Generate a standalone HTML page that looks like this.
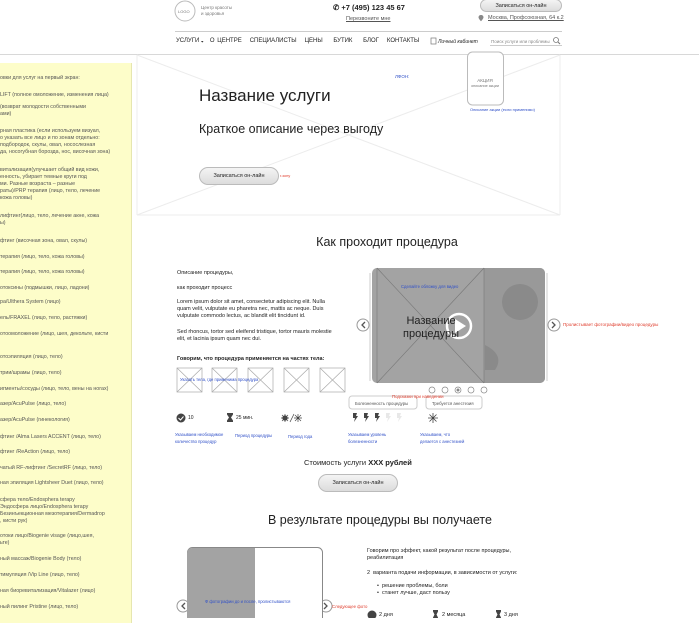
<!DOCTYPE html>
<html><head><meta charset="utf-8">
<style>
*{margin:0;padding:0;box-sizing:border-box}
body{width:699px;height:618px;overflow:hidden;background:#fff;font-family:"Liberation Sans","Noto Sans CJK SC",sans-serif;color:#222;position:relative}
.a{position:absolute;white-space:nowrap}
.s{font-size:5.5px;line-height:7px}
.b{color:#3050c8}
.r{color:#e04030}
.btn{position:absolute;border:1px solid #bbb;border-radius:10px;background:linear-gradient(#f4f4f4,#dcdcdc);font-size:5.5px;display:flex;align-items:center;justify-content:center}
#side{position:absolute;left:0;top:63px;width:132px;height:560px;background:#fdfdc9;border-right:1px solid #e6e6b0;color:#555;font-size:5.3px;line-height:7px;overflow:hidden}
#side div{position:absolute;left:0;white-space:nowrap}
.ico{position:absolute}
</style></head><body>

<svg class="a" style="left:0;top:0" width="699" height="618">
 <line x1="0" y1="54.5" x2="699" y2="54.5" stroke="#d8d8d8"/>
 <line x1="175" y1="31.5" x2="562" y2="31.5" stroke="#ccc"/>
 <!-- hero wireframe -->
 <g stroke="#ececec" stroke-width="1" fill="none">
  <line x1="137" y1="55" x2="137" y2="215"/>
  <line x1="560" y1="55" x2="560" y2="215"/>
  <line x1="137" y1="215" x2="560" y2="215"/>
  <line x1="137" y1="55" x2="560" y2="215"/>
  <line x1="560" y1="55" x2="137" y2="215"/>
 </g>
 <!-- action box -->
 <rect x="467.5" y="52" width="36" height="53" rx="5" fill="#fff" stroke="#bbb"/>
 <!-- logo -->
 <circle cx="185" cy="11" r="10" fill="#fff" stroke="#bbb"/>
 <!-- video -->
 <rect x="372" y="268" width="173" height="115" rx="5" fill="#a3a3a3"/>
 <rect x="484" y="268" width="61" height="115" rx="5" fill="#999"/>
 <rect x="484" y="268" width="6" height="115" fill="#999"/>
 <circle cx="520" cy="302" r="18" fill="#8a8a8a"/>
 <path d="M485 345 q20 10 10 25 l-10 0z" fill="#8a8a8a"/>
 <g stroke="#777" stroke-width="0.6">
  <line x1="377" y1="268" x2="484" y2="383"/><line x1="484" y1="268" x2="377" y2="383"/>
  <line x1="377" y1="268" x2="377" y2="383"/><line x1="484" y1="268" x2="484" y2="383"/>
 </g>
 <path d="M370 273v108M547 273v108" stroke="#ccc"/>
 <circle cx="459" cy="326" r="12" fill="none" stroke="#fff" stroke-width="2.5"/>
 <path d="M455 319v14l11-7z" fill="#fff"/>
 <!-- arrows -->
 <g fill="#fff" stroke="#999">
  <circle cx="363" cy="325" r="6"/><circle cx="554" cy="325" r="6"/>
  <circle cx="183" cy="606" r="6"/><circle cx="326" cy="606" r="6"/>
 </g>
 <g fill="none" stroke="#555" stroke-width="1.3">
  <path d="M365 322l-3 3 3 3"/><path d="M552 322l3 3-3 3"/>
  <path d="M185 603l-3 3 3 3"/><path d="M324 603l3 3-3 3"/>
 </g>
 <!-- dots -->
 <g fill="#fff" stroke="#888" stroke-width="0.7">
  <circle cx="432" cy="390" r="3"/><circle cx="445" cy="390" r="3"/><circle cx="458" cy="390" r="3"/><circle cx="471" cy="390" r="3"/><circle cx="484" cy="390" r="3"/>
 </g>
 <circle cx="458" cy="390" r="1.5" fill="#888"/>
 <!-- body part boxes -->
 <g fill="none" stroke="#aaa" stroke-width="0.7">
  <rect x="177" y="368" width="25" height="24"/><path d="M177 368l25 24M202 368l-25 24"/>
  <rect x="212" y="368" width="25" height="24"/><path d="M212 368l25 24M237 368l-25 24"/>
  <rect x="248" y="368" width="25" height="24"/><path d="M248 368l25 24M273 368l-25 24"/>
  <rect x="284" y="368" width="25" height="24"/><path d="M284 368l25 24M309 368l-25 24"/>
  <rect x="320" y="368" width="25" height="24"/><path d="M320 368l25 24M345 368l-25 24"/>
 </g>
 <!-- tooltips -->
 <rect x="349" y="396" width="68" height="13" rx="3" fill="#fff" stroke="#ccc"/>
 <rect x="426" y="396" width="56" height="13" rx="3" fill="#fff" stroke="#ccc"/>
 <!-- icons row -->
 <circle cx="181" cy="418" r="4.5" fill="#444"/><path d="M178.5 418l2 2 3-3.5" stroke="#fff" fill="none"/>
 <path d="M227 413h6v1.5l-2 3 2 3v1.5h-6v-1.5l2-3-2-3z" fill="#444"/>
 <g stroke="#444" stroke-width="0.7"><circle cx="285" cy="418" r="2.3" fill="#444"/><path d="M281 418h8M285 414v8M282 415l6 6M288 415l-6 6M290 422l4-8M298 414v8M294 418h8M295 415l6 6M301 415l-6 6"/></g>
 <g fill="#444"><path d="M353 413h4l-1 3h2l-4 6 1-4h-2z"/><path d="M364 413h4l-1 3h2l-4 6 1-4h-2z"/><path d="M375 413h4l-1 3h2l-4 6 1-4h-2z"/></g>
 <g fill="#e8e8e8"><path d="M386 413h4l-1 3h2l-4 6 1-4h-2z"/><path d="M397 413h4l-1 3h2l-4 6 1-4h-2z"/></g>
 <g stroke="#444" stroke-width="0.8"><path d="M433 413v10M428 418h10M429.5 414.5l7 7M436.5 414.5l-7 7"/></g>
 <!-- result image -->
 <rect x="187.5" y="547.5" width="135" height="80" rx="5" fill="#fff" stroke="#888"/>
 <path d="M192 548h63v75h-68v-70a5 5 0 0 1 5-5z" fill="#a3a3a3"/>
 <!-- result icons -->
 <circle cx="372" cy="615" r="4.5" fill="#444"/>
 <path d="M433 610h5v1.5l-1.5 3 1.5 3v1.5h-5v-1.5l1.5-3-1.5-3z" fill="#444"/>
 <path d="M496 610h5v1.5l-1.5 3 1.5 3v1.5h-5v-1.5l1.5-3-1.5-3z" fill="#444"/>
 <!-- search icon -->
 <circle cx="556" cy="40" r="2.5" fill="none" stroke="#777" stroke-width="0.8"/><path d="M558 42l2 2" stroke="#777"/>
 <line x1="490" y1="45.5" x2="562" y2="45.5" stroke="#ccc"/>
 <rect x="431" y="38" width="5" height="6" fill="none" stroke="#777" stroke-width="0.7"/>
 <path d="M481 15c-1.5 0-2.5 1-2.5 2.3 0 1.5 2.5 4 2.5 4s2.5-2.5 2.5-4c0-1.3-1-2.3-2.5-2.3z" fill="#888"/>
 <path d="M201 41l2.5 0-1.25 1.6z" fill="#333"/>
</svg>

<div id="side">
<div style="top:12px">овки для услуг на первый экран:</div>
<div style="top:29px">LIFT (полное омоложение, изменения лица)</div>
<div style="top:41px">(возврат молодости собственными<br>ами)</div>
<div style="top:65px">рная пластика (если используем визуал,<br>о указать все лицо и по зонам отдельно:<br>подбородок, скулы, овал, носослезная<br>да, носогубная борозда, нос, височная зона)</div>
<div style="top:104px">витализация(улучшает общий вид кожи,<br>енность, убирает темные круги под<br>ми. Разные возраста – разные<br>раты)/PRP терапия (лицо, тело, лечение<br>кожа головы)</div>
<div style="top:150px">лифтинг(лицо, тело, лечение акне, кожа<br>ы)</div>
<div style="top:175px">фтинг (височная зона, овал, скулы)</div>
<div style="top:191px">терапия (лицо, тело, кожа головы)</div>
<div style="top:206px">терапия (лицо, тело, кожа головы)</div>
<div style="top:222px">отоксины (подмышки, лицо, ладони)</div>
<div style="top:236px">pa/Ulthera System (лицо)</div>
<div style="top:252px">ель/FRAXEL (лицо, тело, растяжки)</div>
<div style="top:268px">отоомоложение (лицо, шея, декольте, кисти<br></div>
<div style="top:291px">отоэпиляция (лицо, тело)</div>
<div style="top:307px">трии/шрамы (лицо, тело)</div>
<div style="top:323px">игменты/сосуды (лицо, тело, вены на ногах)</div>
<div style="top:338px">азер/AcuPulse (лицо, тело)</div>
<div style="top:354px">азер/AcuPulse (гинекология)</div>
<div style="top:371px">фтинг /Alma Lasers ACCENT (лицо, тело)</div>
<div style="top:386px">фтинг /ReAction (лицо, тело)</div>
<div style="top:402px">чатый RF-лифтинг /SecretRF (лицо, тело)</div>
<div style="top:417px">ная эпиляция Lightsheer Duet (лицо, тело)</div>
<div style="top:434px">сфера тело/Endosphera terapy<br>Эндосфера лицо/Endosphera terapy<br>Безинъекционная мезотерапия/Dermadrop<br>, кисти рук)</div>
<div style="top:470px">отоки лицо/Biogenie visage (лицо,шея,<br>ьте)</div>
<div style="top:493px">ный массаж/Biogenie Body (тело)</div>
<div style="top:509px">тимуляция /Vip Line (лицо, тело)</div>
<div style="top:525px">ная биоревитализация/Vitalazer (лицо)</div>
<div style="top:541px">ный пилинг Pristine (лицо, тело)</div>
</div>

<!-- header -->
<div class="a" style="left:178px;top:9px;font-size:4px;color:#777">LOGO</div>
<div class="a s" style="left:201px;top:5px;color:#777;font-size:4.5px;line-height:6px">Центр красоты<br>и здоровья</div>
<div class="a" style="left:333px;top:3px;font-size:7.5px;font-weight:bold">✆ +7 (495) 123 45 67</div>
<div class="a s" style="left:346px;top:16px;color:#555;text-decoration:underline">Перезвоните мне</div>
<div class="btn" style="left:480px;top:-1px;width:82px;height:13px">Записаться он-лайн</div>
<div class="a s" style="left:488px;top:15px;color:#555;text-decoration:underline">Москва, Профсоюзная, 64 к.2</div>
<div class="a" style="left:176px;top:38px;font-size:6px;color:#222;word-spacing:1px">УСЛУГИ &nbsp;&nbsp; О ЦЕНТРЕ &nbsp; СПЕЦИАЛИСТЫ &nbsp; ЦЕНЫ &nbsp;&nbsp; БУТИК &nbsp;&nbsp; БЛОГ &nbsp; КОНТАКТЫ</div>
<div class="a" style="left:438px;top:39px;font-size:5px;font-style:italic">Личный кабинет</div>
<div class="a" style="left:491px;top:39px;font-size:4.5px;color:#888">Поиск услуги или проблемы</div>

<!-- hero -->
<div class="a s b" style="left:395px;top:73px;font-size:4.5px">ЛФОН:</div>
<div class="a" style="left:470px;top:78px;font-size:4.5px;color:#777;text-align:center;width:30px">АКЦИЯ</div>
<div class="a" style="left:467px;top:84px;font-size:3.8px;color:#777;width:36px;text-align:center">описание акции</div>
<div class="a b" style="left:470px;top:107px;font-size:4px">Описание акции (если применимо)</div>
<div class="a" style="left:199px;top:86px;font-size:17px">Название услуги</div>
<div class="a" style="left:199px;top:122px;font-size:12.5px">Краткое описание через выгоду</div>
<div class="btn" style="left:199px;top:167px;width:80px;height:18px">Записаться он-лайн</div>
<div class="a r" style="left:280px;top:173px;font-size:4px">г.зону</div>

<div class="a" style="left:0;width:774px;text-align:center;top:235px;font-size:12.5px">Как проходит процедура</div>
<div class="a s" style="left:177px;top:270px">Описание процедуры,</div>
<div class="a s" style="left:177px;top:285px">как проходит процесс</div>
<div class="a s" style="left:177px;top:299px">Lorem ipsum dolor sit amet, consectetur adipiscing elit. Nulla<br>quam velit, vulputate eu pharetra nec, mattis ac neque. Duis<br>vulputate commodo lectus, ac blandit elit tincidunt id.</div>
<div class="a s" style="left:177px;top:329px">Sed rhoncus, tortor sed eleifend tristique, tortor mauris molestie<br>elit, et lacinia ipsum quam nec dui.</div>
<div class="a s" style="left:177px;top:356px;font-weight:bold">Говорим, что процедура применяется на частях тела:</div>
<div class="a b" style="left:180px;top:377px;font-size:4.2px">Указать тела, где применима процедура</div>
<div class="a b" style="left:401px;top:284px;font-size:4.2px">Сделайте обложку для видео</div>
<div class="a" style="left:403px;top:315px;font-size:11px;color:#222;line-height:13px;text-align:center">Название<br>процедуры</div>
<div class="a r" style="left:563px;top:322px;font-size:4.5px">Пролистывает фотографии/видео процедуры</div>

<div class="a r" style="left:392px;top:394px;font-size:4.3px">Подсказки при наведении</div>
<div class="a" style="left:355px;top:401px;font-size:4.3px;color:#555">Болезненность процедуры</div>
<div class="a" style="left:432px;top:401px;font-size:4.3px;color:#555">Требуется анестезия</div>
<div class="a s" style="left:188px;top:415px;font-size:5px">10</div>
<div class="a s" style="left:236px;top:415px;font-size:5px">25 мин.</div>
<div class="a b" style="left:175px;top:431px;font-size:4.2px;line-height:7px">Указываем необходимое<br>количество процедур</div>
<div class="a b" style="left:235px;top:433px;font-size:4.2px">Период процедуры</div>
<div class="a b" style="left:288px;top:434px;font-size:4.2px">Период года</div>
<div class="a b" style="left:348px;top:431px;font-size:4.2px;line-height:7px">Указываем уровень<br>болезненности</div>
<div class="a b" style="left:420px;top:431px;font-size:4.2px;line-height:7px">Указываем, что<br>делается с анестезией</div>

<div class="a" style="left:304px;top:458px;font-size:7.5px">Стоимость услуги <b>XXX рублей</b></div>
<div class="btn" style="left:318px;top:474px;width:80px;height:18px">Записаться он-лайн</div>
<div class="a" style="left:268px;top:513px;font-size:12.5px">В результате процедуры вы получаете</div>

<div class="a b" style="left:205px;top:599px;font-size:4.2px">Ф фотографии до и после, пролистываются</div>
<div class="a r" style="left:332px;top:604px;font-size:4.3px">Следующее фото</div>
<div class="a s" style="left:367px;top:548px">Говорим про эффект, какой результат после процедуры,<br>реабилитация</div>
<div class="a s" style="left:367px;top:570px">2 &nbsp;варианта подачи информации, в зависимости от услуги:</div>
<div class="a s" style="left:377px;top:583px">•&nbsp; решение проблемы, боли<br>•&nbsp; станет лучше, даст пользу</div>
<div class="a s" style="left:379px;top:612px">2 дня</div>
<div class="a s" style="left:442px;top:612px">2 месяца</div>
<div class="a s" style="left:504px;top:612px">3 дня</div>
</body></html>
